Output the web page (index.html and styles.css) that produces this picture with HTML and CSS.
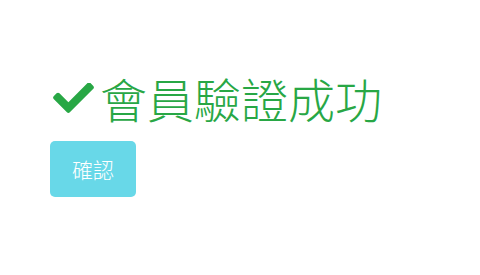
FILE: index.html
```html
<!DOCTYPE html>
<html lang="zh-Hant">
<head>
    <meta charset="UTF-8">
    <title>會員驗證成功</title>
    <link rel="stylesheet" href="styles.css">
</head>
<body>
    <div class="wrap">
        <h1 class="title">
            <svg class="check" viewBox="0 72 512 376" width="41" height="30"><path d="M173.898 439.404l-166.4-166.4c-9.997-9.997-9.997-26.206 0-36.204l36.203-36.204c9.997-9.998 26.207-9.998 36.204 0L192 312.69 432.095 72.596c9.997-9.997 26.207-9.997 36.204 0l36.203 36.204c9.997 9.997 9.997 26.206 0 36.204l-294.4 294.401c-9.998 9.997-26.207 9.997-36.204-.001z"/></svg>
            <span>會員驗證成功</span>
        </h1>
        <button class="btn">確認</button>
    </div>
</body>
</html>
```
FILE: styles.css
```css
body {
    margin: 0;
    font-family: "Noto Sans CJK TC", "Noto Sans", sans-serif;
    background: #fff;
}
.wrap {
    padding: 66px 50px 0;
}
.title {
    display: flex;
    align-items: center;
    gap: 6px;
    margin: 0 0 11px 3px;
    font-size: 47px;
    font-weight: 300;
    line-height: 64px;
    color: #28a745;
}
.check {
    fill: #28a745;
    flex: none;
}
.btn {
    width: 86px;
    height: 56px;
    border: none;
    border-radius: 5px;
    background: #68d8e8;
    color: #fff;
    font-family: inherit;
    font-size: 21px;
    font-weight: 300;
}
```
